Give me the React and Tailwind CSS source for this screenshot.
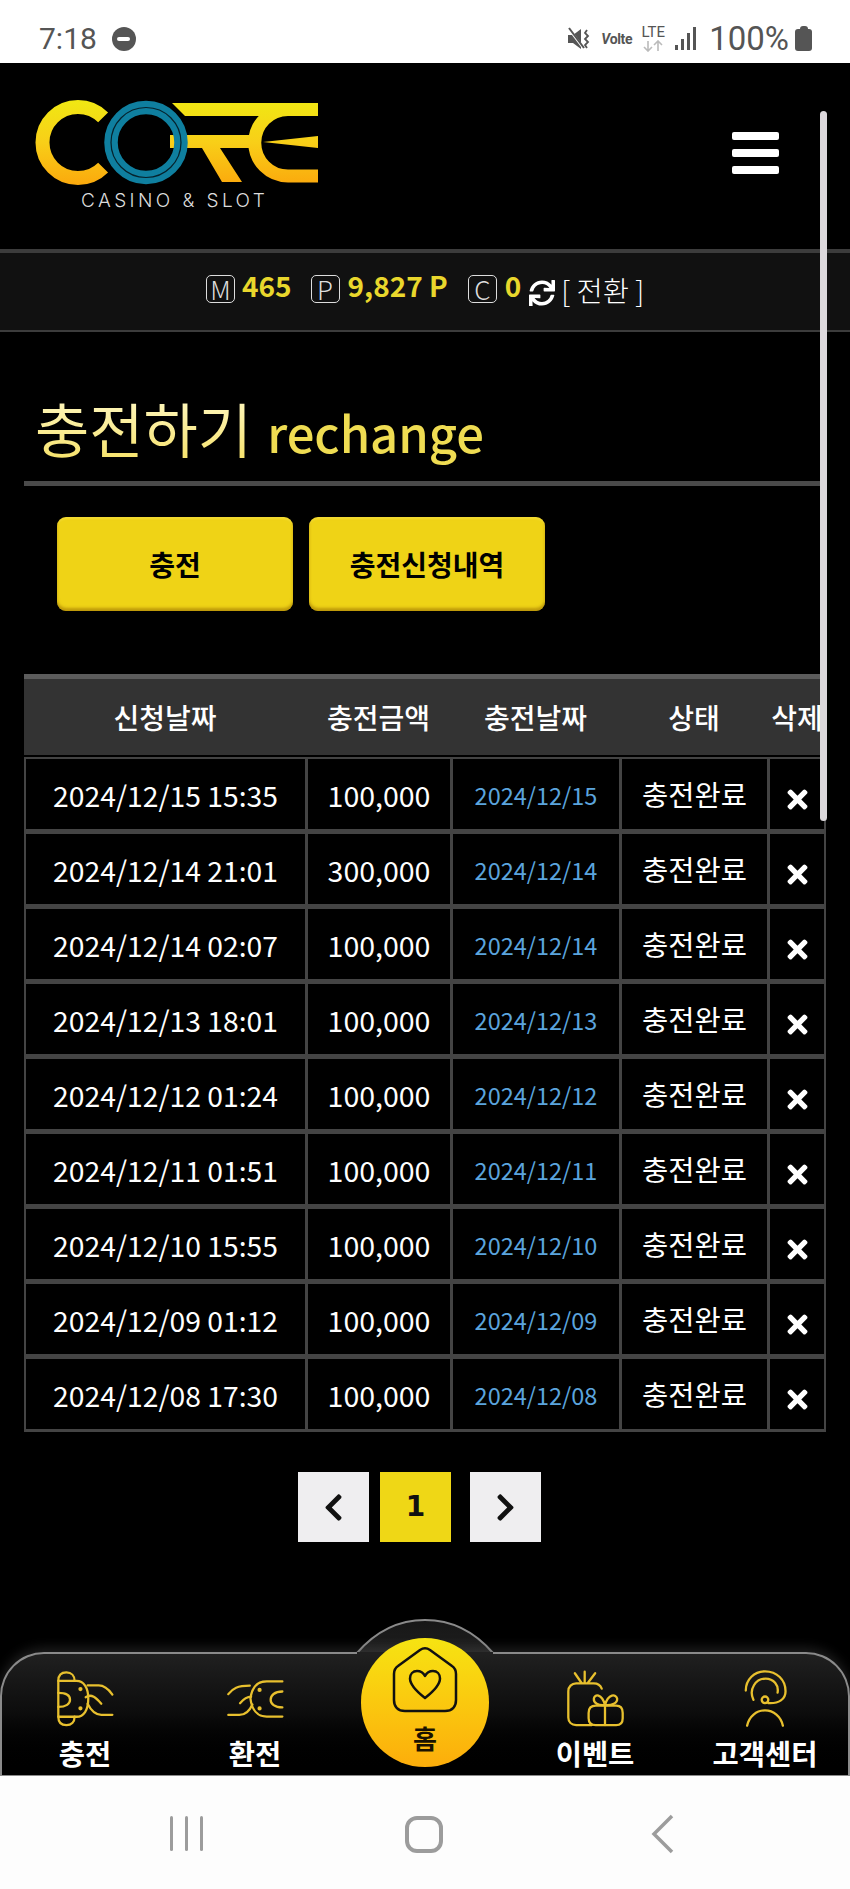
import React from "react";
import { FaTimes, FaChevronLeft, FaChevronRight, FaSync } from "react-icons/fa";

const rows = [
  ["2024/12/15 15:35", "100,000", "2024/12/15"],
  ["2024/12/14 21:01", "300,000", "2024/12/14"],
  ["2024/12/14 02:07", "100,000", "2024/12/14"],
  ["2024/12/13 18:01", "100,000", "2024/12/13"],
  ["2024/12/12 01:24", "100,000", "2024/12/12"],
  ["2024/12/11 01:51", "100,000", "2024/12/11"],
  ["2024/12/10 15:55", "100,000", "2024/12/10"],
  ["2024/12/09 01:12", "100,000", "2024/12/09"],
  ["2024/12/08 17:30", "100,000", "2024/12/08"],
];

const StatusBar = () => (
  <div className="h-[63px] bg-white flex items-center justify-between pl-[39px] pr-[38px] pt-[14px] text-[#555] font-['Roboto',sans-serif]">
    <div className="flex items-center gap-[15px]">
      <span className="text-[30px] leading-none">7:18</span>
      <span className="w-[24px] h-[24px] rounded-full bg-[#555] flex items-center justify-center">
        <span className="w-[13px] h-[4px] bg-white rounded-sm" />
      </span>
    </div>
    <div className="flex items-center">
      <svg width="24" height="24" viewBox="0 0 24 24" className="mr-[10px]">
        <path d="M1 8h5l8-6v20l-8-6H1z" fill="#555" />
        <path d="M2 2l15 20" stroke="#fff" strokeWidth="2.5" />
        <path d="M2 1l15 20" stroke="#555" strokeWidth="2" />
        <path d="M20 3l-2 3 3 3-3 3 3 3-3 3 2 3" stroke="#555" strokeWidth="1.8" fill="none" />
      </svg>
      <span className="text-[14px] font-bold mr-[9px] leading-none tracking-tight italic">V<span className="not-italic">olte</span></span>
      <div className="flex flex-col items-center mr-[10px] leading-none">
        <span className="text-[15px] leading-[15px]">LTE</span>
        <svg width="24" height="12" viewBox="0 0 24 12">
          <path d="M7 1v10M3 7l4 4 4-4M17 11V1M13 5l4-4 4 4" stroke="#bbb" strokeWidth="1.6" fill="none" />
        </svg>
      </div>
      <div className="flex items-end gap-[3px] h-[23px] mr-[13px]">
        <span className="w-[3px] h-[5px] bg-[#555]" />
        <span className="w-[3px] h-[11px] bg-[#555]" />
        <span className="w-[3px] h-[17px] bg-[#555]" />
        <span className="w-[3px] h-[23px] bg-[#555]" />
      </div>
      <span className="text-[33px] leading-none mr-[6px]">100%</span>
      <div className="flex flex-col items-center">
        <span className="w-[8px] h-[3px] bg-[#555] rounded-t-sm" />
        <span className="w-[17px] h-[22px] bg-[#555] rounded-[3px]" />
      </div>
    </div>
  </div>
);

const Logo = () => (
  <svg width="290" height="90" viewBox="30 98 290 90" className="block">
    <defs>
      <linearGradient id="coreGold" gradientUnits="userSpaceOnUse" x1="0" y1="100" x2="0" y2="184">
        <stop offset="0" stopColor="#f0e813" />
        <stop offset="0.5" stopColor="#f8cf18" />
        <stop offset="1" stopColor="#fbaa0d" />
      </linearGradient>
    </defs>
    <path d="M103.100 117.400A35.500 35.500 0 1 0 103.100 167.600" fill="none" stroke="url(#coreGold)" strokeWidth="14" />
    <path d="M172 103H290V116H185Z" fill="url(#coreGold)" />
    <path d="M170 135H254V148H220L242 182H222L202 148H170Z" fill="url(#coreGold)" />
    <path d="M318 109.500H288A33.200 33.200 0 0 0 288 176H318" fill="none" stroke="url(#coreGold)" strokeWidth="13" />
    <path d="M263 142L318 136V148Z" fill="url(#coreGold)" />
    <circle cx="146" cy="142.500" r="35" fill="none" stroke="#0f7f9f" strokeWidth="13.500" />
    <circle cx="146" cy="142.500" r="35" fill="none" stroke="#06222c" strokeWidth="1.200" />
  </svg>
);

const InfoBox = ({ letter }) => (
  <span className="w-[29px] h-[28px] border border-[#ddd] rounded-[5px] flex items-center justify-center text-[#ddd] text-[26px] font-extralight leading-none">
    {letter}
  </span>
);

const InfoBar = () => (
  <div className="h-[83px] bg-[#111] border-t-[4px] border-b-[2px] border-t-[#3c3c3c] border-b-[#3c3c3c] flex items-center pl-[206px] pb-[6px]">
    <InfoBox letter="M" />
    <span className="ml-[7px] -mt-[7px] text-[28px] font-bold text-[#e9d72c] leading-none">465</span>
    <span className="ml-[19px]"><InfoBox letter="P" /></span>
    <span className="ml-[8px] -mt-[7px] text-[28px] font-bold text-[#e9d72c] leading-none">9,827 P</span>
    <span className="ml-[20px]"><InfoBox letter="C" /></span>
    <span className="ml-[8px] -mt-[7px] text-[28px] font-bold text-[#e9d72c] leading-none">0</span>
    <FaSync className="ml-[8px] mt-[8px] text-white text-[26px]" />
    <span className="ml-[6px] mt-[4px] text-[28.500px] font-light text-white leading-none whitespace-nowrap">[ 전환 ]</span>
  </div>
);

const NavIcon = ({ w, h, box, children }) => (
  <svg width={w} height={h} viewBox={box} fill="none" stroke="#e8c02e" strokeWidth="7" strokeLinecap="round" strokeLinejoin="round">
    {children}
  </svg>
);

const ChargeIcon = () => (
  <NavIcon w={57} h={57} box="168 146 175 172">
    <path d="M172 178C172 160 182 152 197 152C212 152 222 162 222 178" />
    <path d="M172 288C172 306 182 314 197 314C212 314 222 304 222 288" />
    <path d="M172 178V288M172 178H228C250 178 264 198 264 232C264 268 250 288 228 288H172" />
    <path d="M172 215C196 215 208 224 208 236C208 248 196 258 172 258" />
    <path d="M262 192H296C314 192 328 206 338 220" />
    <path d="M256 228C274 216 288 230 304 248" />
    <path d="M262 248C272 268 284 282 304 282H338" />
    <circle cx="240" cy="203" r="3" fill="#e8c02e" />
    <circle cx="240" cy="262" r="3" fill="#e8c02e" />
  </NavIcon>
);

const ExchangeIcon = () => (
  <NavIcon w={57} h={40} box="678 174 175 118">
    <path d="M848 179H800C772 179 754 198 750 232C754 266 772 287 800 287H848" />
    <path d="M848 210C824 210 812 222 812 235C812 248 824 259 848 259" />
    <path d="M682 218C696 200 710 192 748 192" />
    <path d="M718 246C730 232 740 226 752 226" />
    <path d="M682 282H716C736 282 748 268 756 250" />
    <circle cx="778" cy="205" r="3" fill="#e8c02e" />
    <circle cx="778" cy="262" r="3" fill="#e8c02e" />
  </NavIcon>
);

const EventIcon = () => (
  <NavIcon w={57} h={57} box="424 148 174 172">
    <path d="M478 152V186M448 157L468 186M510 157L488 186" />
    <path d="M530 204C526 194 518 188 506 188H452C438 188 428 198 428 212V292C428 306 438 315 452 315H500" />
    <path d="M490 278C490 262 498 256 512 256H574C588 256 594 262 594 278V294C594 308 586 315 574 315H512C498 315 490 308 490 294Z" />
    <path d="M540 256V315" />
    <path d="M540 254C520 256 504 248 506 234C508 220 530 218 540 254C550 218 574 220 577 234C579 248 560 256 540 254Z" />
  </NavIcon>
);

const SupportIcon = () => (
  <NavIcon w={45} h={57} box="955 148 133 172">
    <path d="M962 210C962 176 988 152 1020 152C1056 152 1082 178 1082 212C1082 236 1062 250 1030 248" />
    <path d="M985 238C970 206 992 174 1022 174C1046 174 1062 194 1058 216" />
    <circle cx="1020" cy="238" r="10" />
    <path d="M966 316C972 288 994 270 1020 270C1046 270 1068 288 1074 316" />
  </NavIcon>
);

const NavItem = ({ label, icon }) => (
  <div className="w-[170px] h-full flex flex-col items-center justify-end pb-[5px]">
    <div className="h-[57px] flex items-center justify-center">{icon}</div>
    <span className="mt-[8px] text-[28.500px] font-bold text-white leading-[36px] whitespace-nowrap">{label}</span>
  </div>
);

const BottomNav = () => (
  <div className="relative h-[124px] mt-[110px]">
    {/* dome behind the home button */}
    <svg width="850" height="36" viewBox="0 0 850 36" className="absolute left-0 top-[-33px]">
      <defs>
        <linearGradient id="domeFill" x1="0" y1="0" x2="0" y2="1">
          <stop offset="0" stopColor="#161616" />
          <stop offset="1" stopColor="#202020" />
        </linearGradient>
      </defs>
      <path d="M357 34C376 12 400 1 425 1C450 1 474 12 493 34Z" fill="url(#domeFill)" />
      <path d="M357 34C376 12 400 1 425 1C450 1 474 12 493 34" fill="none" stroke="#8a8a8a" strokeWidth="2" />
    </svg>
    <div className="absolute inset-0 rounded-t-[44px] border-t-2 border-x-2 border-b border-[#8a8a8a] bg-linear-to-b from-[#202020] via-[#0c0c0c] to-black shadow-[0_-4px_12px_rgba(90,90,90,0.35)]" />
    <span className="absolute left-[357px] top-0 w-[136px] h-[3px] bg-[#202020]" />
    <div className="relative flex h-full">
      <NavItem label="충전" icon={<ChargeIcon />} />
      <NavItem label="환전" icon={<ExchangeIcon />} />
      <div className="w-[170px]" />
      <NavItem label="이벤트" icon={<EventIcon />} />
      <NavItem label="고객센터" icon={<SupportIcon />} />
    </div>
    {/* home button */}
    <div className="absolute left-[361px] top-[-14px] w-[128px] h-[129px] rounded-full bg-linear-to-b from-[#f6e412] to-[#fcad0b] flex flex-col items-center pt-[8px]">
      <svg width="68" height="67" viewBox="0 0 68 67" fill="none" stroke="#111" strokeWidth="2.500" strokeLinejoin="round">
        <path d="M3 28C3 24 4 22 7 20L29 4C32 2 36 2 39 4L61 20C64 22 65 24 65 28V54C65 61 61 65 54 65H14C7 65 3 61 3 54Z" />
        <path d="M34 52C25 45 19 39 19 32.500C19 28 22 25 26 25C29.500 25 32.500 27 34 30C35.500 27 38.500 25 42 25C46 25 49 28 49 32.500C49 39 43 45 34 52Z" />
      </svg>
      <span className="mt-[7px] text-[26px] font-bold text-[#1a1200] leading-[36px]">홈</span>
    </div>
  </div>
);

const AndroidNav = () => (
  <div className="h-[113px] bg-[#fdfdfd] relative flex items-start pt-[40px]">
    <div className="w-[203px] flex justify-end gap-[12px]">
      <span className="w-[3px] h-[35px] bg-[#9c9c9c] rounded-sm" />
      <span className="w-[3px] h-[35px] bg-[#9c9c9c] rounded-sm" />
      <span className="w-[3px] h-[35px] bg-[#9c9c9c] rounded-sm" />
    </div>
    <div className="ml-[202px] w-[38px] h-[37px] border-[4px] border-[#9c9c9c] rounded-[12px]" />
    <svg width="24" height="40" viewBox="0 0 24 40" className="ml-[208px] -mt-[2px]" fill="none" stroke="#9c9c9c" strokeWidth="3.500">
      <path d="M21 2L3 20L21 38" />
    </svg>
  </div>
);

const cell = "border-t-2 border-b-[3px] border-l-2 border-r border-[#444]";

const App = () => {
  return (
    <div className="w-[850px] h-[1889px] overflow-hidden relative bg-black font-['Noto_Sans_CJK_KR','Noto_Sans',sans-serif]">
      <StatusBar />

      {/* header */}
      <div className="h-[186px] flex justify-between pl-[30px] pr-[71px]">
        <div className="pt-[35px]">
          <Logo />
          <div className="ml-[51px] mt-[2px] text-[19px] leading-[22px] tracking-[0.18em] text-[#dcdcdc] font-['Inter',sans-serif] font-light whitespace-nowrap">
            CASINO &amp; SLOT
          </div>
        </div>
        <div className="pt-[69px] flex flex-col gap-[9px]">
          <span className="block w-[47px] h-[8px] bg-white rounded-[2px]" />
          <span className="block w-[47px] h-[8px] bg-white rounded-[2px]" />
          <span className="block w-[47px] h-[8px] bg-white rounded-[2px]" />
        </div>
      </div>

      <InfoBar />

      {/* title */}
      <div className="ml-[24px] w-[802px] h-[154px] border-b-[5px] border-[#4a4a4a] flex items-end pl-[11px] pb-[13px] whitespace-nowrap">
        <h1 className="mb-[4px] text-[59px] leading-[72px] font-normal bg-linear-to-b from-[#fff8c4] to-[#f6e163] bg-clip-text text-transparent">충전하기</h1>
        <span className="ml-[15px] text-[49px] leading-[72px] font-medium text-[#efdc52]">rechange</span>
      </div>

      {/* tabs */}
      <div className="ml-[57px] mt-[31px] flex gap-[16px]">
        {["충전", "충전신청내역"].map((label) => (
          <button
            key={label}
            className="w-[236px] h-[94px] rounded-[9px] bg-[#efd316] text-black text-[28px] font-bold shadow-[inset_0_-3px_3px_rgba(150,105,0,0.55),inset_0_2px_2px_rgba(255,240,120,0.3)]"
          >
            {label}
          </button>
        ))}
      </div>

      {/* history table */}
      <table className="ml-[24px] mt-[63px] w-[802px] table-fixed border-separate border-spacing-0">
        <colgroup>
          <col className="w-[282px]" />
          <col className="w-[145px]" />
          <col className="w-[169px]" />
          <col className="w-[148px]" />
          <col className="w-[58px]" />
        </colgroup>
        <thead>
          <tr className="h-[83px] bg-[#333] text-white text-[28px]">
            <th className="border-t-[5px] border-b-2 border-t-[#5c5c5c] border-b-black font-medium">신청날짜</th>
            <th className="border-t-[5px] border-b-2 border-t-[#5c5c5c] border-b-black font-medium">충전금액</th>
            <th className="border-t-[5px] border-b-2 border-t-[#5c5c5c] border-b-black font-medium">충전날짜</th>
            <th className="border-t-[5px] border-b-2 border-t-[#5c5c5c] border-b-black font-medium">상태</th>
            <th className="border-t-[5px] border-b-2 border-t-[#5c5c5c] border-b-black font-medium whitespace-nowrap">삭제</th>
          </tr>
        </thead>
        <tbody>
          {rows.map((row, i) => (
            <tr key={i} className="h-[75px] text-white text-center">
              <td className={`${cell} text-[28.300px] pt-[2px]`}>{row[0]}</td>
              <td className={`${cell} text-[28.500px] pt-[2px]`}>{row[1]}</td>
              <td className={`${cell} text-[#5ba4dd] text-[23.500px] pt-[4px]`}>{row[2]}</td>
              <td className={`${cell} text-[28.500px]`}>충전완료</td>
              <td className="border-t-2 border-b-[3px] border-x-2 border-[#444]">
                <FaTimes className="mx-auto mt-[10px] text-white text-[29px]" />
              </td>
            </tr>
          ))}
        </tbody>
      </table>

      {/* pagination */}
      <div className="mt-[40px] ml-[298px] flex">
        <span className="w-[71px] h-[70px] bg-[#efeef0] flex items-center justify-center text-[#111] text-[31px]"><FaChevronLeft /></span>
        <span className="ml-[11px] w-[71px] h-[70px] bg-[#efd716] flex items-center justify-center text-[#111] text-[28px] font-bold font-['DejaVu_Sans',sans-serif]">1</span>
        <span className="ml-[19px] w-[71px] h-[70px] bg-[#efeef0] flex items-center justify-center text-[#111] text-[31px]"><FaChevronRight /></span>
      </div>

      <BottomNav />
      <AndroidNav />

      {/* scroll thumb */}
      <span className="absolute left-[820px] top-[111px] w-[7px] h-[710px] rounded-full bg-[#dcd8dc]" />
    </div>
  );
};

export default App;
